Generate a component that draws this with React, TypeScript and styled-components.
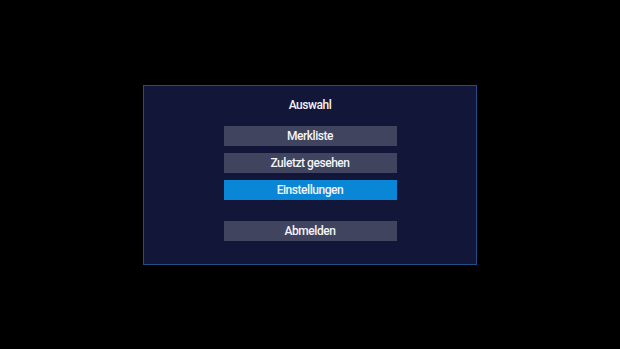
import React from "react";
import styled, { createGlobalStyle } from "styled-components";

const Global = createGlobalStyle`
  html, body { margin: 0; padding: 0; background: #000; }
  #root { width: 100vw; height: 100vh; }
`;

const Screen = styled.div`
  width: 100%;
  height: 100%;
  display: flex;
  align-items: center;
  justify-content: center;
  background: #000;
  font-family: Roboto, "Noto Sans", sans-serif;
`;

const Panel = styled.div`
  box-sizing: border-box;
  width: 334px;
  height: 180px;
  background: #121739;
  border: 1px solid #1f4f86;
  padding: 11px 0 0;
  display: flex;
  flex-direction: column;
  align-items: center;
`;

const Title = styled.div`
  color: #f2f2f6;
  font-size: 12px;
  font-weight: 500;
  letter-spacing: -0.45px;
  line-height: 16px;
  height: 16px;
  margin-bottom: 13px;
`;

const Menu = styled.div`
  display: flex;
  flex-direction: column;
  gap: 7px;
  width: 173px;
`;

const Item = styled.div<{ $active?: boolean; $spaced?: boolean }>`
  height: 20px;
  display: flex;
  align-items: center;
  justify-content: center;
  background: ${(p) => (p.$active ? "#0a86d7" : "#41445e")};
  color: #f4f4f8;
  font-size: 12px;
  font-weight: 500;
  letter-spacing: -0.45px;
  margin-top: ${(p) => (p.$spaced ? "14px" : "0")};
`;

export default function App() {
  return (
    <>
      <Global />
      <Screen>
        <Panel>
          <Title>Auswahl</Title>
          <Menu>
            <Item>Merkliste</Item>
            <Item>Zuletzt gesehen</Item>
            <Item $active>Einstellungen</Item>
            <Item $spaced>Abmelden</Item>
          </Menu>
        </Panel>
      </Screen>
    </>
  );
}
